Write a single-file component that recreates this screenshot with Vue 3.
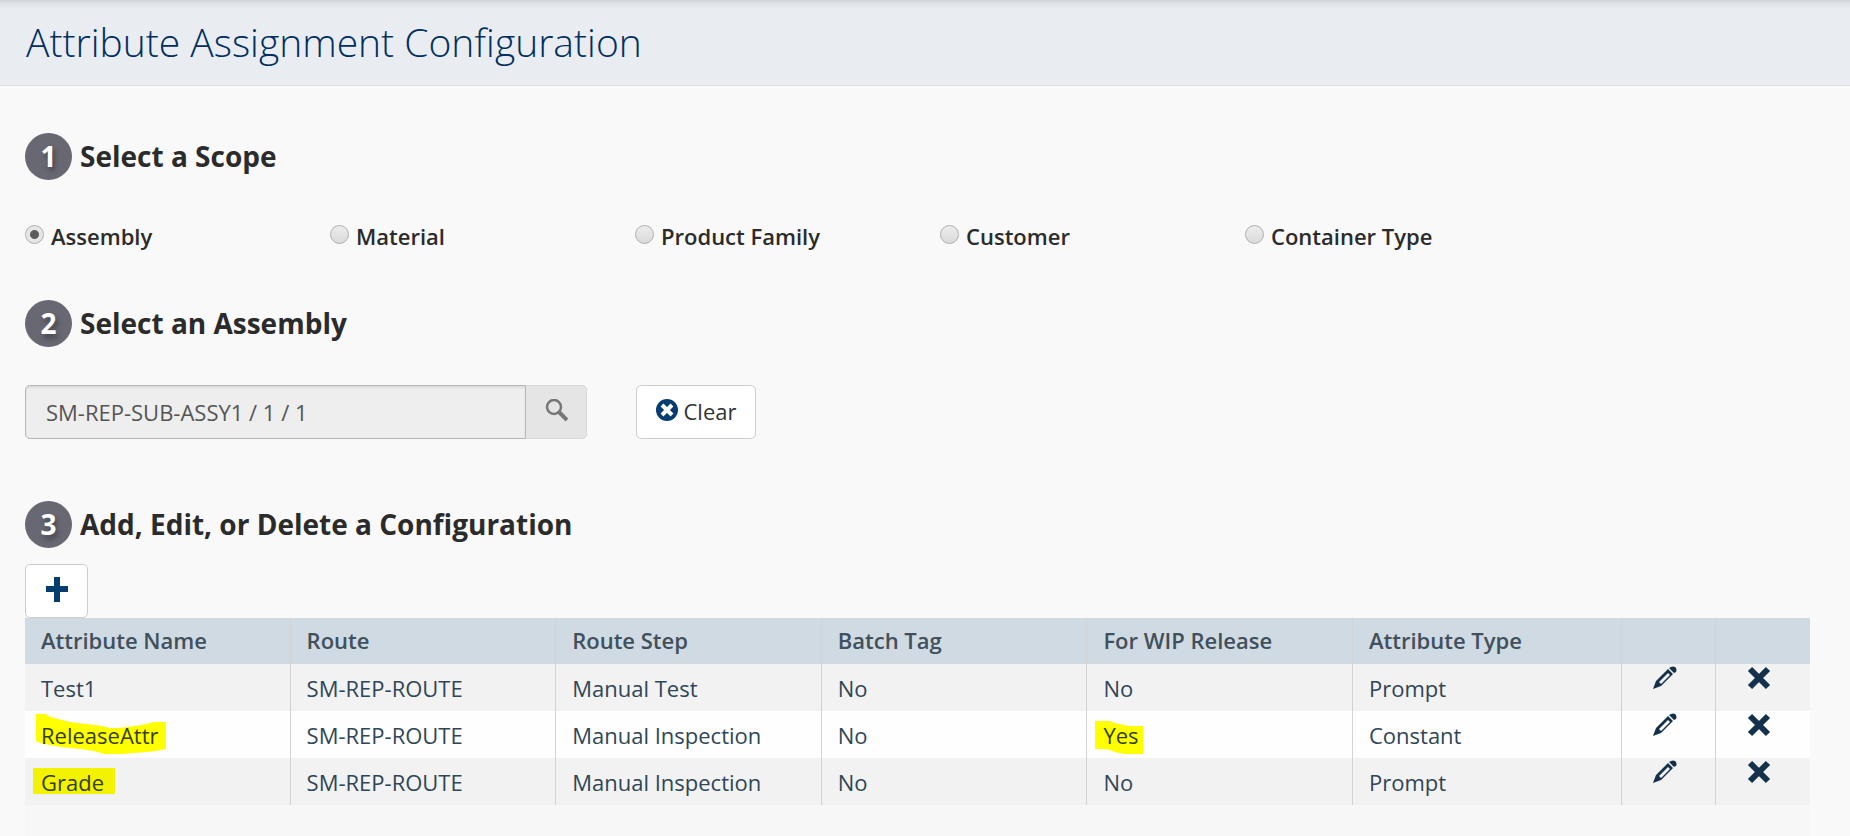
<script setup>
import { ref } from 'vue'

const scopes = ['Assembly', 'Material', 'Product Family', 'Customer', 'Container Type']
const scope = ref('Assembly')
const assembly = ref('SM-REP-SUB-ASSY1 / 1 / 1')

const columns = ['Attribute Name', 'Route', 'Route Step', 'Batch Tag', 'For WIP Release', 'Attribute Type']
const rows = [
  { cells: ['Test1', 'SM-REP-ROUTE', 'Manual Test', 'No', 'No', 'Prompt'], marks: {} },
  { cells: ['ReleaseAttr', 'SM-REP-ROUTE', 'Manual Inspection', 'No', 'Yes', 'Constant'], marks: { 0: 'wave', 4: 'slant' } },
  { cells: ['Grade', 'SM-REP-ROUTE', 'Manual Inspection', 'No', 'No', 'Prompt'], marks: { 0: 'flat' } }
]
const markers = {
  wave: { w: 131, h: 40, d: 'M0 0H10L14 3L22 5L34 8L50 10L66 12L74 14H84L98 12L106 11L118 8H130V35L120 37L110 38L98 39L86 40H68L58 37L44 35L24 33L14 31L4 29L0 27Z' },
  slant: { w: 48, h: 33, d: 'M0 0H15L20 2L29 4L34 5H48V33H29L20 31L15 29L9 28H0Z' },
  flat: { w: 82, h: 26, d: 'M0 0H82V26H0Z' }
}
</script>

<template>
  <div class="page">
    <header class="title-bar">
      <h1>Attribute Assignment Configuration</h1>
    </header>

    <main class="content">
      <h2 class="step"><span class="badge">1</span>Select a Scope</h2>
      <div class="scopes" role="radiogroup" aria-label="Scope">
        <label v-for="s in scopes" :key="s" class="scope">
          <input v-model="scope" type="radio" name="scope" :value="s" />
          <span>{{ s }}</span>
        </label>
      </div>

      <h2 class="step">
        <span class="badge">2</span><label for="assembly">Select an Assembly</label>
      </h2>
      <div class="picker">
        <div class="search">
          <input id="assembly" v-model="assembly" type="text" readonly />
          <button type="button" aria-label="Search">
            <svg width="24" height="24" viewBox="0 0 24 24" fill="none" stroke="#777">
              <circle cx="10" cy="8" r="7" stroke-width="2.5" />
              <path d="M14 12L23 21" stroke-width="4" />
            </svg>
          </button>
        </div>
        <button type="button" class="btn clear" @click="assembly = ''">
          <svg width="24" height="26" viewBox="0 0 24 26">
            <circle cx="11" cy="12" r="11" fill="#053d71" />
            <path d="M6 7L16 17M16 7L6 17" stroke="#fff" stroke-width="4" />
          </svg>
          <span>Clear</span>
        </button>
      </div>

      <h2 class="step"><span class="badge">3</span>Add, Edit, or Delete a Configuration</h2>
      <button type="button" class="btn add" aria-label="Add">
        <svg width="24" height="28" viewBox="0 0 24 28">
          <path d="M9 1H15V10H23V16H15V26H9V16H1V10H9Z" fill="#053d71" />
        </svg>
      </button>
      <div class="grid">
        <table>
          <colgroup>
            <col v-for="c in 5" :key="c" class="col-data" />
            <col />
            <col class="col-action" />
            <col class="col-action" />
          </colgroup>
          <thead>
            <tr>
              <th v-for="c in columns" :key="c" scope="col">{{ c }}</th>
              <th></th>
              <th></th>
            </tr>
          </thead>
          <tbody>
            <tr v-for="row in rows" :key="row.cells[0]">
              <td v-for="(cell, i) in row.cells" :key="i">
                <span class="cell">
                  <svg
                    v-if="row.marks[i]"
                    :class="['marker', row.marks[i]]"
                    :width="markers[row.marks[i]].w"
                    :height="markers[row.marks[i]].h"
                  ><path :d="markers[row.marks[i]].d" /></svg>
                  <span class="value">{{ cell }}</span>
                </span>
              </td>
              <td class="action">
                <button type="button" aria-label="Edit">
                  <svg width="24" height="24" viewBox="0 0 24 24" fill="#14304a">
                    <path fill-rule="evenodd" d="M15 3L20 8L8 20L0 23L3 15ZM15 7L6 16L8 18L17 9Z" />
                    <path d="M16 2L18 1Q20 0 22 1L23 2Q24 4 23 6L21 7Z" />
                  </svg>
                </button>
              </td>
              <td class="action">
                <button type="button" aria-label="Delete">
                  <svg width="24" height="24" viewBox="0 0 24 24">
                    <path d="M3 3L21 21M21 3L3 21" stroke="#14304a" stroke-width="6" />
                  </svg>
                </button>
              </td>
            </tr>
          </tbody>
        </table>
      </div>
    </main>
  </div>
</template>

<style>
body {
  margin: 0;
  background: #f9f9f9;
}
</style>

<style scoped>
.page {
  display: flex;
  flex-direction: column;
  min-height: 100vh;
  box-sizing: border-box;
  background: #f9f9f9;
  color: #2b2b2b;
  font-family: "Open Sans", "Noto Sans", sans-serif;
  font-size: 22px;
}
.title-bar {
  height: 85px;
  border-bottom: 1px solid #d9dfe6;
  background: linear-gradient(#cfd3d8 0, #e1e5ea 4px, #e9ecf1 9px);
}
h1 {
  margin: 0;
  padding-left: 26px;
  font-size: 39px;
  font-weight: 300;
  line-height: 84px;
  color: #002f60;
}
.content {
  display: flex;
  flex: 1;
  flex-direction: column;
  padding: 46px 40px 0 25px;
}
.step {
  display: flex;
  align-items: center;
  gap: 8px;
  height: 48px;
  margin: 0;
  font-size: 28px;
  font-weight: 700;
  line-height: 46px;
}
.badge {
  width: 47px;
  height: 47px;
  border-radius: 50%;
  background: #686873;
  color: #fff;
  line-height: 47px;
  text-align: center;
  text-shadow: 2px 4px 5px #44444e;
}
.scopes {
  display: flex;
  height: 48px;
  margin: 32px 0 39px;
}
.scope {
  display: flex;
  align-items: center;
  gap: 7px;
  width: 305px;
  font-weight: 600;
}
.scope input {
  appearance: none;
  width: 19px;
  height: 19px;
  margin: 0 0 4px;
  border: 1px solid #b0b0b0;
  border-radius: 50%;
  background: linear-gradient(#ededed, #dadada);
}
.scope input:checked {
  background: radial-gradient(circle, #5c5c5c 4px, #e6e6e6 5px);
}
.picker {
  display: flex;
  gap: 49px;
  height: 54px;
  margin: 38px 0 61px;
}
.search {
  display: flex;
  width: 562px;
}
.search input {
  flex: 1;
  min-width: 0;
  padding: 0 20px;
  border: 1px solid #b5b5b5;
  border-radius: 5px 0 0 5px;
  background: #eee;
  box-shadow: inset 0 2px 2px #ddd;
  color: #555;
  font: inherit;
}
.search button {
  width: 61px;
  border: 1px solid #d9d9d9;
  border-left: 0;
  border-radius: 0 5px 5px 0;
  background: #e5e5e5;
  padding: 0;
}
.btn {
  display: flex;
  align-items: center;
  justify-content: center;
  gap: 4px;
  padding: 0 0 2px;
  border: 1px solid #ccc;
  border-radius: 5px;
  background: #fff;
  color: #333;
  font: inherit;
}
.clear {
  width: 120px;
}
.add {
  width: 63px;
  height: 54px;
  margin-top: 16px;
}
.grid {
  flex: 1;
  background: #f7f7f7;
}
table {
  width: 100%;
  border-collapse: separate;
  border-spacing: 0;
  table-layout: fixed;
}
.col-data {
  width: 14.88%;
}
.col-action {
  width: 94px;
}
th,
td {
  height: 47px;
  box-sizing: border-box;
  padding: 0 16px;
  border-right: 1px solid #d3d3d3;
  line-height: 30px;
  text-align: left;
}
th:last-child,
td:last-child {
  border-right: 0;
}
th {
  height: 46px;
  padding-bottom: 2px;
  background: #d0dae2;
  color: #40505c;
  font-weight: 600;
}
td {
  background: #f2f2f2;
  color: #2f4656;
}
tbody tr:nth-child(even) td {
  background: #fefefe;
}
.cell {
  position: relative;
}
.value {
  position: relative;
}
.marker {
  position: absolute;
  fill: #ffff00;
}
.marker + .value {
  color: #333f00;
}
.wave {
  left: -5px;
  top: -6px;
}
.slant {
  left: -8px;
  top: 1px;
}
.flat {
  left: -8px;
  top: 1px;
  fill: #f3f300;
}
.action {
  padding: 2px 8px 0 0;
  text-align: center;
  vertical-align: top;
}
.action button {
  padding: 0;
  border: 0;
  background: none;
}
.action svg {
  display: block;
}
</style>
